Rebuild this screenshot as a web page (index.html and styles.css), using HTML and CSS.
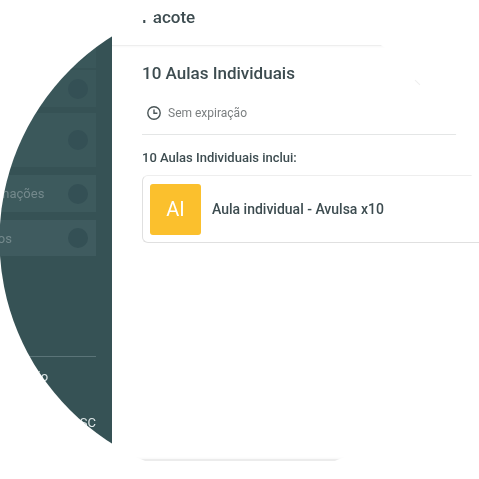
FILE: index.html
```html
<!DOCTYPE html>
<html lang="pt">
<head>
<meta charset="utf-8">
<title>Pacote</title>
<link rel="stylesheet" href="styles.css">
</head>
<body>
<div class="lens">
  <aside class="sidebar">
    <div class="menu">
      <div class="item item-top"><span class="label">Início</span><span class="dot"></span></div>
      <div class="item item-a"><span class="label">Agenda</span><span class="dot"></span></div>
      <div class="item item-b"><span class="label">Turmas</span><span class="dot"></span></div>
      <div class="item item-c"><span class="label">Informações</span><span class="dot"></span></div>
      <div class="item item-d"><span class="label">Cursos</span><span class="dot"></span></div>
    </div>
    <div class="foot">
      <div class="foot-line"></div>
      <div class="foot-config">Configuração</div>
      <div class="foot-place">Florianópolis - SC</div>
    </div>
  </aside>
  <main class="main">
    <header class="topbar">
      <h1 class="page-title">Pacote<span class="title-mask"></span></h1>
    </header>
    <section class="content">
      <h2 class="pack-name">10 Aulas Individuais</h2>
      <div class="expiry">
        <svg class="clock" viewBox="0 0 16 16" aria-hidden="true"><circle cx="8" cy="8" r="6.2"/><path d="M8 4.4V8.3H11.4"/></svg>
        <span>Sem expiração</span>
      </div>
      <div class="rule"></div>
      <h3 class="includes">10 Aulas Individuais inclui:</h3>
      <div class="card">
        <div class="tile">AI</div>
        <div class="card-name">Aula individual - Avulsa x10</div>
      </div>
    </section>
    <div class="bottom-edge"></div>
    <span class="speck"></span>
  </main>
</div>
</body>
</html>
```
FILE: styles.css
```css
* { box-sizing: border-box; }
html, body { margin: 0; padding: 0; background: #fff; }
body { width: 479px; height: 479px; overflow: hidden; font-family: Roboto, "Liberation Sans", sans-serif; }
.lens { width: 479px; height: 479px; display: flex; clip-path: circle(240.5px at 240px 240px); background: #fff; filter: blur(.3px); }

.sidebar { flex: 0 0 141px; margin-left: -29px; height: 479px; background: #365255; display: flex; flex-direction: column; padding-top: 33px; }
.menu { display: flex; flex-direction: column; width: 125px; }
.item { display: flex; align-items: center; justify-content: space-between; background: #3a575a; padding-right: 8px; color: #74898c; font-size: 13px; }
.dot { width: 20px; height: 20px; border-radius: 50%; background: #345055; }
.item-top { height: 35px; margin-bottom: 2px; }
.item-a { height: 37px; margin-bottom: 6px; }
.item-b { height: 54px; margin-bottom: 8px; background: #3b585b; }
.item-c { height: 37px; margin-bottom: 8px; background: #3d5a5d; }
.item-d { height: 36px; background: #3f5b5f; }

.foot { display: flex; flex-direction: column; margin-top: 100px; width: 125px; color: #dfe7e8; font-size: 13px; }
.foot-line { height: 1px; background: #5b7478; }
.foot-config { margin-top: 12px; line-height: 15px; white-space: nowrap; }
.foot-place { margin-top: 31px; line-height: 15px; white-space: nowrap; text-align: right; direction: rtl; overflow: hidden; }

.main { flex: 1; position: relative; background: #fff; }
.topbar { height: 46px; border-bottom: 1px solid #eeeeee; box-shadow: 0 1px 2px rgba(0,0,0,.03); padding: 6px 0 0 30px; }
.page-title { position: relative; margin: 0; font-size: 17px; line-height: 22px; font-weight: 500; color: #3d4c50; }
.title-mask { position: absolute; left: 0; top: 0; width: 12px; height: 14px; background: #fff; }
.content { padding: 17px 0 0 30px; }
.pack-name { margin: 0; font-size: 17px; line-height: 20px; font-weight: 500; color: #3d4c50; }
.expiry { display: flex; align-items: center; gap: 6px; margin-top: 22px; padding-left: 4px; font-size: 12px; line-height: 16px; color: #7b7f80; }
.clock { width: 16px; height: 16px; fill: none; stroke: #4a5557; stroke-width: 1.4; }
.rule { height: 1px; margin-top: 13px; background: #e4e6e6; }
.includes { margin: 14px 0 0; font-size: 13px; line-height: 17px; font-weight: 500; color: #3d4c50; }
.card { display: flex; align-items: center; gap: 11px; height: 68px; margin-top: 9px; padding-left: 7px; border: 1px solid #e0e0e0; border-top-color: #eeeeee; border-right: 0; border-radius: 6px 0 0 6px; }
.tile { width: 51px; height: 51px; border-radius: 3px; background: #fbc02d; color: #fff; font-size: 20px; display: flex; align-items: center; justify-content: center; }
.card-name { font-size: 14px; font-weight: 500; color: #3d4c50; }
.bottom-edge { height: 2px; margin: 216px 0 0 0; background: #ececec; box-shadow: 0 -1px 2px rgba(0,0,0,.03); }
.speck { position: absolute; left: 302px; top: 82px; width: 7px; height: 1px; background: #eeeeee; transform: rotate(45deg); }
```
